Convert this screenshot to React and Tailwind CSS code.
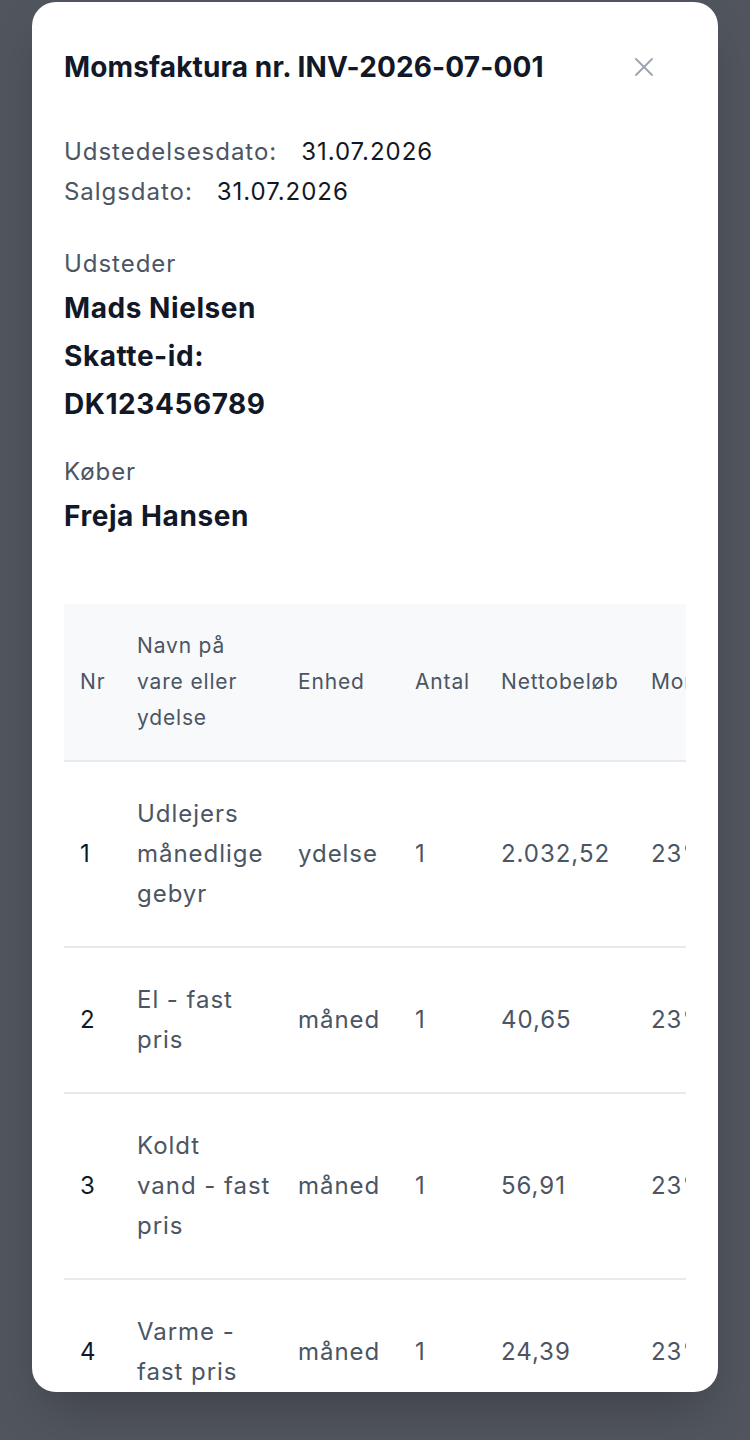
import React from 'react';
import { X } from 'lucide-react';

const columns = [
  { key: 'nr', label: 'Nr', width: 'w-[57px]' },
  { key: 'name', label: 'Navn på\nvare eller\nydelse', width: 'w-[161px]' },
  { key: 'unit', label: 'Enhed', width: 'w-[117px]' },
  { key: 'qty', label: 'Antal', width: 'w-[86px]' },
  { key: 'net', label: 'Nettobeløb', width: 'w-[150px]' },
  { key: 'vat', label: 'Moms', width: 'w-[100px]' },
  { key: 'vatAmount', label: 'Momsbeløb', width: 'w-[150px]' },
  { key: 'gross', label: 'Bruttobeløb', width: 'w-[150px]' },
];

const items = [
  { nr: 1, name: 'Udlejers\nmånedlige\ngebyr', unit: 'ydelse', qty: 1, net: '2.032,52', vat: '23%', vatAmount: '467,48', gross: '2.500,00' },
  { nr: 2, name: 'El - fast\npris', unit: 'måned', qty: 1, net: '40,65', vat: '23%', vatAmount: '9,35', gross: '50,00' },
  { nr: 3, name: 'Koldt\nvand - fast\npris', unit: 'måned', qty: 1, net: '56,91', vat: '23%', vatAmount: '13,09', gross: '70,00' },
  { nr: 4, name: 'Varme -\nfast pris', unit: 'måned', qty: 1, net: '24,39', vat: '23%', vatAmount: '5,61', gross: '30,00' },
  { nr: 5, name: 'Internet', unit: 'måned', qty: 1, net: '81,30', vat: '23%', vatAmount: '18,70', gross: '100,00' },
];

const InvoiceTable = () => (
  <div className="mt-16 w-full overflow-x-auto">
    <table className="table-fixed border-collapse text-left w-[971px]">
      <thead className="bg-[#f8f9fb]">
        <tr className="border-b-2 border-[#e8eaee]">
          {columns.map((col) => (
            <th
              key={col.key}
              className={`${col.width} px-4 py-6 text-[21px] leading-9 tracking-[0.04em] font-normal text-[#4b5563] whitespace-pre align-middle`}
            >
              {col.label}
            </th>
          ))}
        </tr>
      </thead>
      <tbody>
        {items.map((item) => (
          <tr key={item.nr} className="border-b-2 border-[#e8eaee]">
            {columns.map((col) => (
              <td
                key={col.key}
                className={`px-4 py-8 text-[24px] leading-10 tracking-[0.04em] whitespace-pre align-middle ${
                  col.key === 'nr' ? 'text-[#111827]' : 'text-[#4b5563]'
                }`}
              >
                {item[col.key]}
              </td>
            ))}
          </tr>
        ))}
      </tbody>
    </table>
  </div>
);

export default function App() {
  return (
    <div
      className="h-[1440px] w-full bg-[#51555e] overflow-hidden"
      style={{ fontFamily: 'Inter, "Open Sans", sans-serif' }}
    >
      <div className="mx-8 mt-[2px] h-[1390px] bg-white rounded-3xl shadow-2xl overflow-hidden">
        <div className="px-8 pt-8">
          <div className="flex items-center justify-between h-[66px]">
            <h2 className="text-[28px] font-bold tracking-[0.005em] text-[#111827]">
              Momsfaktura nr. INV-2026-07-001
            </h2>
            <button type="button" className="mr-[22px] w-10 h-10 flex items-center justify-center text-[#9ca3af]">
              <X size={32} strokeWidth={1.4} />
            </button>
          </div>

          <div className="mt-8 text-[24px] leading-10 tracking-[0.04em]">
            <div className="flex gap-6">
              <span className="text-[#4b5563]">Udstedelsesdato:</span>
              <span className="text-[#111827]">31.07.2026</span>
            </div>
            <div className="flex gap-6">
              <span className="text-[#4b5563]">Salgsdato:</span>
              <span className="text-[#111827]">31.07.2026</span>
            </div>
          </div>

          <div className="mt-8">
            <p className="text-[24px] leading-10 tracking-[0.04em] text-[#4b5563]">Udsteder</p>
            <div className="text-[28px] leading-[48px] font-bold tracking-[0.02em] text-[#111827]">
              <p>Mads Nielsen</p>
              <p>Skatte-id:</p>
              <p>DK123456789</p>
            </div>
          </div>

          <div className="mt-6">
            <p className="text-[24px] leading-10 tracking-[0.04em] text-[#4b5563]">Køber</p>
            <p className="text-[28px] leading-[48px] font-bold tracking-[0.02em] text-[#111827]">Freja Hansen</p>
          </div>

          <InvoiceTable />
        </div>
      </div>
    </div>
  );
}
